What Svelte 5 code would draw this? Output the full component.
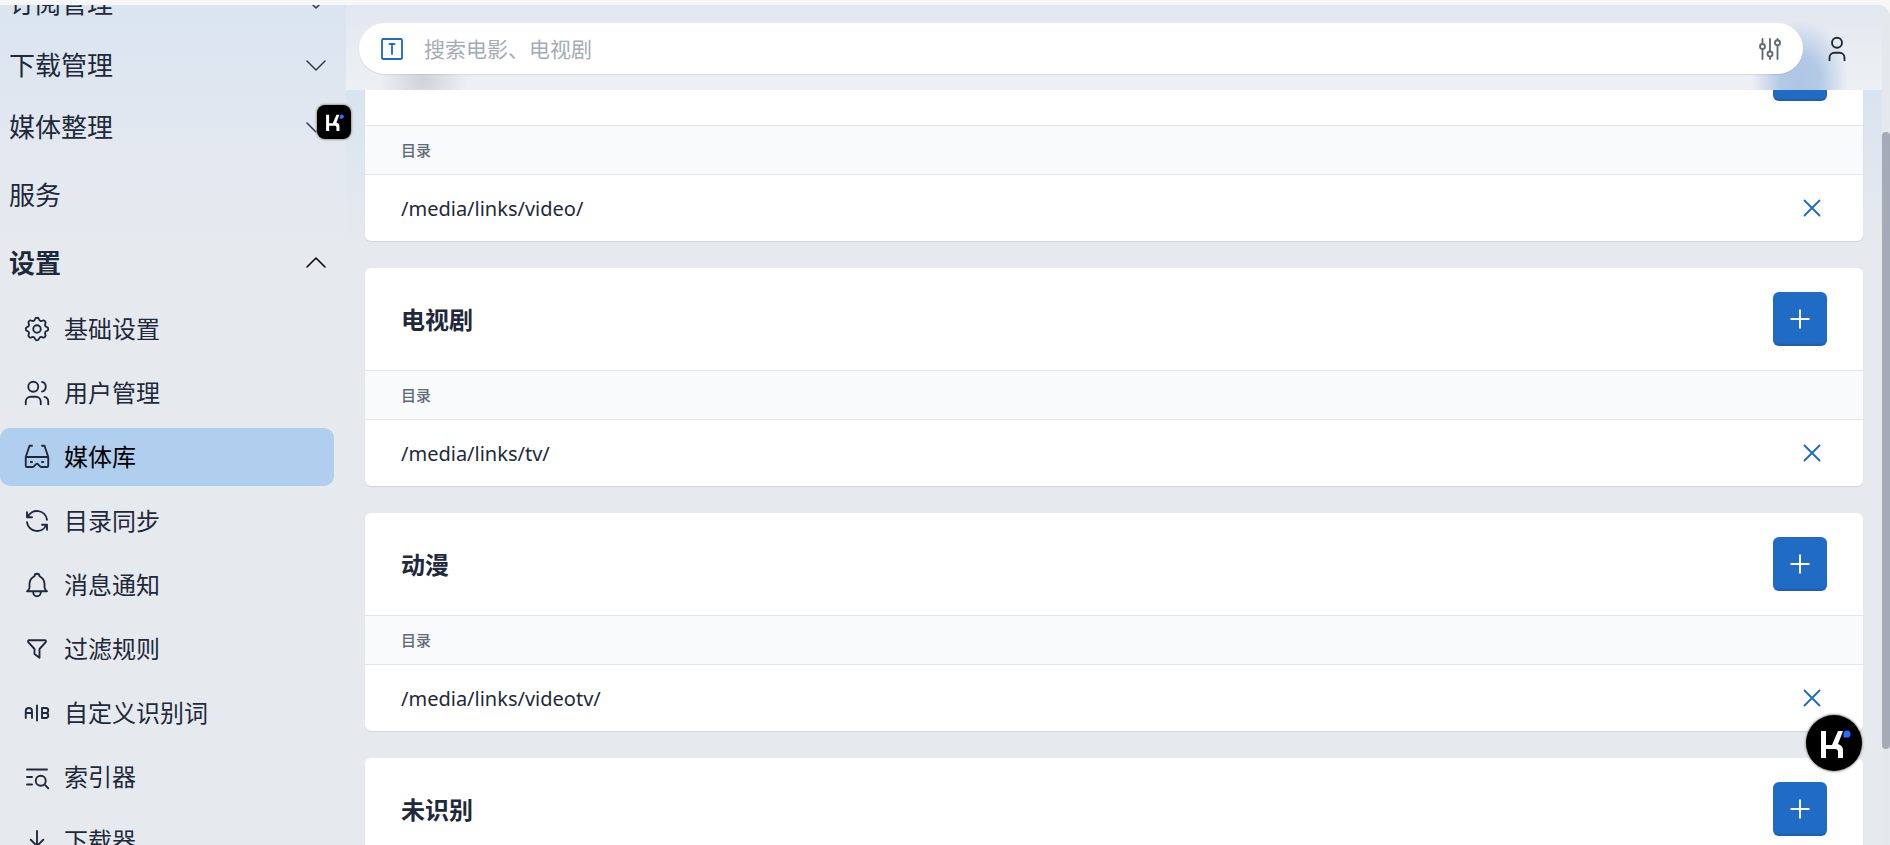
<script>
const groups = [
  { name: '订阅管理', arrow: true },
  { name: '下载管理', arrow: true },
  { name: '媒体整理', arrow: true },
]

const settings = [
  { name: '基础设置', icon: 'settings' },
  { name: '用户管理', icon: 'users' },
  { name: '媒体库', icon: 'glasses', active: true },
  { name: '目录同步', icon: 'refresh' },
  { name: '消息通知', icon: 'bell' },
  { name: '过滤规则', icon: 'filter' },
  { name: '自定义识别词', icon: 'ab' },
  { name: '索引器', icon: 'listSearch' },
  { name: '下载器', icon: 'download' },
]

const icons = {
  settings: 'M10.325 4.317c.426 -1.756 2.924 -1.756 3.35 0a1.724 1.724 0 0 0 2.573 1.066c1.543 -.94 3.31 .826 2.37 2.37a1.724 1.724 0 0 0 1.065 2.572c1.756 .426 1.756 2.924 0 3.35a1.724 1.724 0 0 0 -1.066 2.573c.94 1.543 -.826 3.31 -2.37 2.37a1.724 1.724 0 0 0 -2.572 1.065c-.426 1.756 -2.924 1.756 -3.35 0a1.724 1.724 0 0 0 -2.573 -1.066c-1.543 .94 -3.31 -.826 -2.37 -2.37a1.724 1.724 0 0 0 -1.065 -2.572c-1.756 -.426 -1.756 -2.924 0 -3.35a1.724 1.724 0 0 0 1.066 -2.573c-.94 -1.543 .826 -3.31 2.37 -2.37c1 .608 2.296 .07 2.572 -1.065zM9 12a3 3 0 1 0 6 0a3 3 0 0 0 -6 0',
  users: 'M5 7a4 4 0 1 0 8 0a4 4 0 1 0 -8 0M3 21v-2a4 4 0 0 1 4 -4h4a4 4 0 0 1 4 4v2M16 3.13a4 4 0 0 1 0 7.75M21 21v-2a4 4 0 0 0 -3 -3.85',
  glasses: 'M8 3h-2l-3 9M16 3h2l3 9M3 12v7a1 1 0 0 0 1 1h4.586a1 1 0 0 0 .707 -.293l2 -2a1 1 0 0 1 1.414 0l2 2a1 1 0 0 0 .707 .293h4.586a1 1 0 0 0 1 -1v-7h-18zM7 16h1M16 16h1',
  refresh: 'M20 11a8.1 8.1 0 0 0 -15.5 -2m-.5 -4v4h4M4 13a8.1 8.1 0 0 0 15.5 2m.5 4v-4h-4',
  bell: 'M10 5a2 2 0 0 1 4 0a7 7 0 0 1 4 6v3a4 4 0 0 0 2 3h-16a4 4 0 0 0 2 -3v-3a7 7 0 0 1 4 -6M9 17v1a3 3 0 0 0 6 0v-1',
  filter: 'M5.5 5h13a1 1 0 0 1 .5 1.5l-5 5.5v7l-4 -3v-4l-5 -5.5a1 1 0 0 1 .5 -1.5',
  ab: 'M3 16v-5.5a2.5 2.5 0 0 1 5 0v5.5m0 -4h-5M12 6v12M16 16v-8h3a2 2 0 0 1 0 4h-3m3 0a2 2 0 0 1 0 4h-3',
  listSearch: 'M11 15a4 4 0 1 0 8 0a4 4 0 1 0 -8 0M18.5 18.5l2.5 2.5M4 6h16M4 12h4M4 18h4',
  download: 'M4 17v2a2 2 0 0 0 2 2h12a2 2 0 0 0 2 -2v-2M7 11l5 5l5 -5M12 4v12',
  letterT: 'M4 5a1 1 0 0 1 1 -1h14a1 1 0 0 1 1 1v14a1 1 0 0 1 -1 1h-14a1 1 0 0 1 -1 -1zM10 8h4M12 8v8',
  adjustments: 'M4 10a2 2 0 1 0 4 0a2 2 0 0 0 -4 0M6 4v4M6 12v8M10 16a2 2 0 1 0 4 0a2 2 0 0 0 -4 0M12 4v10M12 18v2M16 7a2 2 0 1 0 4 0a2 2 0 0 0 -4 0M18 4v1M18 9v11',
  user: 'M8 7a4 4 0 1 0 8 0a4 4 0 1 0 -8 0M6 21v-2a4 4 0 0 1 4 -4h4a4 4 0 0 1 4 4v2',
  plus: 'M12 5v14M5 12h14',
  x: 'M18 6l-12 12M6 6l12 12',
}

let libraries = $state([
  { title: '电影', paths: ['/media/links/video/'] },
  { title: '电视剧', paths: ['/media/links/tv/'] },
  { title: '动漫', paths: ['/media/links/videotv/'] },
  { title: '未识别', paths: [] },
])

let keyword = $state('')

function removePath(library, path) {
  library.paths = library.paths.filter((p) => p !== path)
}
</script>

<svelte:head>
  <title>媒体库</title>
</svelte:head>

{#snippet icon(name)}
  <svg class="icon" viewBox="0 0 24 24" aria-hidden="true"><path d={icons[name]} /></svg>
{/snippet}

{#snippet chevron(up)}
  <svg class="chevron" class:up viewBox="0 0 20 20" aria-hidden="true"><path d="M1 6l9 9l9 -9" /></svg>
{/snippet}

{#snippet mark()}
  <svg class="mark" viewBox="-28 -28 56 56" aria-hidden="true">
    <path class="k" d="M-13 -12h5v14h6l6 -14h5l-5 13c3 1 5 3 5 6v8h-5v-6c0 -2 -1 -3 -3 -3h-9v9h-5z" />
    <path class="dot" d="M9.500 -5.500v-4a3.500 3.500 0 1 1 3.500 4z" />
  </svg>
{/snippet}

<div class="page">
  <aside>
    <nav>
      {#each groups as group}
        <a class="group" href="#top">{group.name}{@render chevron(false)}</a>
      {/each}
      <a class="group spaced" href="#service">服务</a>
      <a class="group spaced open" href="#settings">设置{@render chevron(true)}</a>
      <ul>
        {#each settings as item}
          <li>
            <a class="item" class:active={item.active} href="#item">
              {@render icon(item.icon)}<span>{item.name}</span>
            </a>
          </li>
        {/each}
      </ul>
    </nav>
  </aside>

  <main>
    <header>
      <form class="search" onsubmit={(e) => e.preventDefault()}>
        <button type="button" class="type" aria-label="搜索类型">{@render icon('letterT')}</button>
        <input type="text" placeholder="搜索电影、电视剧" aria-label="搜索" bind:value={keyword} />
        <button type="button" class="adjust" aria-label="筛选">{@render icon('adjustments')}</button>
      </form>
      <button type="button" class="user" aria-label="用户">{@render icon('user')}</button>
    </header>

    <div class="content">
      {#each libraries as library}
        <section class="card">
          <div class="card-header">
            <h3>{library.title}</h3>
            <button type="button" class="add" aria-label="添加">{@render icon('plus')}</button>
          </div>
          {#if library.paths.length > 0}
            <table>
              <thead>
                <tr><th scope="col">目录</th><th aria-label="操作"></th></tr>
              </thead>
              <tbody>
                {#each library.paths as path}
                  <tr>
                    <td class="path">{path}</td>
                    <td class="action">
                      <button type="button" aria-label="删除" onclick={() => removePath(library, path)}>{@render icon('x')}</button>
                    </td>
                  </tr>
                {/each}
              </tbody>
            </table>
          {/if}
        </section>
      {/each}
    </div>
  </main>

  <div class="scrollbar"><div class="thumb"></div></div>
</div>

<button type="button" class="badge square" aria-label="助手">{@render mark()}</button>
<button type="button" class="badge round" aria-label="助手">{@render mark()}</button>

<style>
  :global(body) {
    background: #f7f7f7;
    color: #1e293b;
    font-family: "Noto Sans", "Noto Sans CJK SC", sans-serif;
  }
  .page, .page * {
    box-sizing: border-box;
  }
  .page {
    display: grid;
    grid-template-columns: 346px minmax(0, 1fr) 8px;
    height: calc(100vh - 5px);
    margin-top: 5px;
    border-top-right-radius: 12px;
    overflow: hidden;
    background: #e6e9ee;
  }
  a {
    color: inherit;
    text-decoration: none;
  }
  button {
    display: flex;
    align-items: center;
    justify-content: center;
    padding: 0;
    border: 0;
    background: none;
    color: inherit;
    cursor: pointer;
  }
  .icon {
    display: block;
    flex: none;
    width: 30px;
    height: 30px;
    fill: none;
    stroke: currentColor;
    stroke-width: 1.5;
    stroke-linecap: round;
    stroke-linejoin: round;
  }

  /* sidebar */
  aside {
    overflow: hidden;
    background: linear-gradient(#dae5f0, #e4e8f0 170px, #e6e9ee 240px);
  }
  nav {
    display: flex;
    flex-direction: column;
    /* scrolled part of the menu */
    margin-top: -33px;
  }
  .group {
    display: flex;
    align-items: center;
    justify-content: space-between;
    height: 62px;
    padding: 0 20px 0 9px;
    font-size: 26px;
    line-height: 40px;
  }
  .spaced {
    margin-top: 6px;
  }
  .open {
    font-weight: 700;
  }
  .chevron {
    width: 20px;
    height: 20px;
    fill: none;
    stroke: #333a45;
    stroke-width: 1.5;
    stroke-linecap: round;
    stroke-linejoin: round;
  }
  .up {
    transform: rotate(180deg);
    stroke: #000;
  }
  ul {
    display: flex;
    flex-direction: column;
    gap: 6px;
    margin: 6px 12px 0 0;
    padding: 0;
    list-style: none;
  }
  .item {
    display: flex;
    align-items: center;
    gap: 12px;
    height: 58px;
    padding-left: 22px;
    border-radius: 10px;
    font-size: 24px;
    line-height: 36px;
  }
  .active {
    background: #b0ceed;
  }
  .active span {
    color: #000;
  }

  /* header lies over the scrolled content */
  main {
    display: grid;
    grid-template-columns: minmax(0, 1fr);
    grid-template-rows: minmax(0, 1fr);
    overflow: hidden;
    background: linear-gradient(#d8e4f0 80px, #e6e9ee 240px);
  }
  header, .content {
    grid-area: 1 / 1;
  }
  header {
    z-index: 1;
    align-self: start;
    display: flex;
    align-items: center;
    gap: 19px;
    height: 85px;
    padding: 2px 30px 0 13px;
    background:
      radial-gradient(ellipse 44px 36px at 77px 76px, #cfd2d9, #cfd2d900),
      radial-gradient(ellipse 48px 60px at calc(100% - 82px) 75px, #aec6e4, #b2c9e5 40%, #b2c9e500),
      linear-gradient(#e1e7f0, #e8ebf1 40px, #ecf0f4 75px);
  }
  .search {
    display: flex;
    flex: 1;
    align-items: center;
    height: 51px;
    padding: 0 18px;
    border-radius: 26px;
    background: #fff;
    box-shadow: 0 1px 1px rgba(30, 41, 59, 0.1);
  }
  .search input {
    flex: 1;
    min-width: 0;
    height: 32px;
    padding: 0 17px;
    border: 0;
    outline: 0;
    background: none;
    color: inherit;
    font: inherit;
    font-size: 21px;
  }
  .search input::placeholder {
    color: #a5abb6;
    opacity: 1;
  }
  .type {
    color: #206bc4;
  }
  .adjust {
    color: #626976;
  }

  /* media library cards */
  .content {
    display: flex;
    flex-direction: column;
    gap: 27px;
    padding: 18px 19px 0;
  }
  .card {
    flex: none;
    border-radius: 6px;
    background: #fff;
    box-shadow: 0 1px 1px rgba(30, 41, 59, 0.1);
  }
  .card-header {
    display: flex;
    align-items: center;
    justify-content: space-between;
    height: 102px;
    padding: 0 36px;
  }
  h3 {
    margin: 0;
    padding-top: 2px;
    font-size: 24px;
    line-height: 36px;
    font-weight: 700;
  }
  .add {
    width: 54px;
    height: 54px;
    border-radius: 6px;
    background: #206bc4;
    box-shadow: inset 0 -2px 1px rgba(30, 41, 59, 0.16);
    color: #fff;
  }
  table {
    width: 100%;
    border-collapse: separate;
    border-spacing: 0;
  }
  th {
    height: 50px;
    padding: 0 36px;
    border-top: 1px solid #e3e6e9;
    border-bottom: 1px solid #e3e6e9;
    background: #f8fafc;
    color: #626976;
    font-size: 15px;
    line-height: 24px;
    font-weight: 500;
    text-align: left;
  }
  td {
    height: 66px;
    padding: 0 36px;
    font-size: 20px;
    line-height: 30px;
  }
  .path {
    padding-top: 2px;
  }
  .action {
    width: 30px;
  }
  .action button {
    color: #206bc4;
  }

  .scrollbar {
    display: grid;
    grid-template-rows: 127fr 617fr 96fr;
    background: #e4e7eb;
  }
  .thumb {
    grid-row: 2;
    border-radius: 6px;
    background: #a5abb6;
  }

  /* floating buttons */
  .badge {
    position: fixed;
    z-index: 2;
    background: #000;
    box-shadow: 0 0 2px 1px #a5a19d;
  }
  .square {
    top: 105px;
    left: 317px;
    width: 34px;
    height: 34px;
    border-radius: 8px;
  }
  .round {
    right: 28px;
    bottom: 74px;
    width: 56px;
    height: 56px;
    border-radius: 50%;
  }
  .mark {
    width: 100%;
    height: 100%;
  }
  .k {
    fill: #fff;
  }
  .dot {
    fill: #2f6bff;
  }
</style>
